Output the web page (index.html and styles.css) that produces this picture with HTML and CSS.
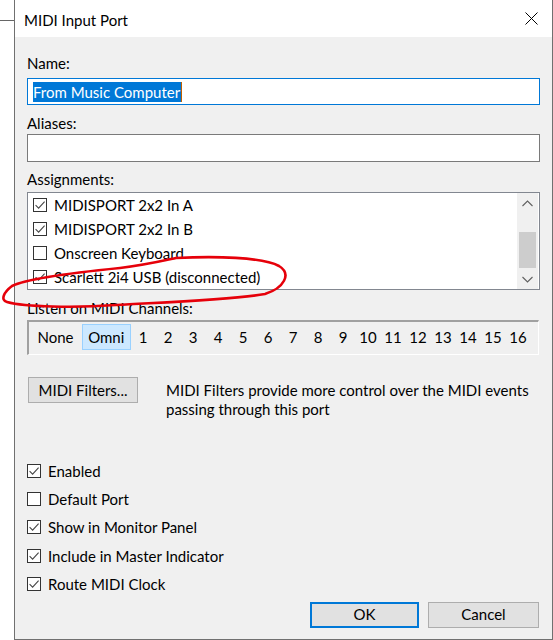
FILE: index.html
```html
<!DOCTYPE html>
<html>
<head>
<meta charset="utf-8">
<link rel="stylesheet" href="styles.css">
</head>
<body>
<div class="bgmark"></div>
<div class="dialog">
  <div class="titlebar">
    <span class="title">MIDI Input Port</span>
    <svg class="close" width="13" height="13" viewBox="0 0 13 13"><path d="M0.5 0.5 L12.5 12.5 M12.5 0.5 L0.5 12.5" stroke="#000" stroke-width="1" fill="none"/></svg>
  </div>
  <div class="content">
    <div class="label l-name">Name:</div>
    <div class="field focus"><span class="sel">From Music Computer</span><span class="caret"></span></div>
    <div class="label l-alias">Aliases:</div>
    <div class="field alias"></div>
    <div class="label l-assign">Assignments:</div>
    <div class="listbox">
      <div class="items">
        <div class="row"><span class="cb"><svg viewBox="0 0 12 12"><path d="M1.6 6.2 L4.6 9.2 L10.6 2.6" stroke="#444" stroke-width="1.05" fill="none"/></svg></span><span>MIDISPORT 2x2 In A</span></div>
        <div class="row"><span class="cb"><svg viewBox="0 0 12 12"><path d="M1.6 6.2 L4.6 9.2 L10.6 2.6" stroke="#444" stroke-width="1.05" fill="none"/></svg></span><span>MIDISPORT 2x2 In B</span></div>
        <div class="row"><span class="cb"></span><span>Onscreen Keyboard</span></div>
        <div class="row"><span class="cb"><svg viewBox="0 0 12 12"><path d="M1.6 6.2 L4.6 9.2 L10.6 2.6" stroke="#444" stroke-width="1.05" fill="none"/></svg></span><span>Scarlett 2i4 USB (disconnected)</span></div>
      </div>
      <div class="scrollbar">
        <div class="arrow"><svg width="11" height="7" viewBox="0 0 11 7"><path d="M0.5 6 L5.5 1 L10.5 6" stroke="#606060" stroke-width="1.1" fill="none"/></svg></div>
        <div class="track"><div class="thumb"></div></div>
        <div class="arrow"><svg width="11" height="7" viewBox="0 0 11 7"><path d="M0.5 1 L5.5 6 L10.5 1" stroke="#606060" stroke-width="1.1" fill="none"/></svg></div>
      </div>
    </div>
    <div class="label l-listen">Listen on MIDI Channels:</div>
    <div class="channels">
      <span class="ch none">None</span>
      <span class="ch omni">Omni</span>
      <span class="ch">1</span><span class="ch">2</span><span class="ch">3</span><span class="ch">4</span>
      <span class="ch">5</span><span class="ch">6</span><span class="ch">7</span><span class="ch">8</span>
      <span class="ch">9</span><span class="ch">10</span><span class="ch">11</span><span class="ch">12</span>
      <span class="ch">13</span><span class="ch">14</span><span class="ch">15</span><span class="ch">16</span>
    </div>
    <div class="filters">
      <div class="btn filt">MIDI Filters...</div>
      <p class="desc">MIDI Filters provide more control over the MIDI events passing through this port</p>
    </div>
    <div class="checks">
      <div class="crow"><span class="cb"><svg viewBox="0 0 12 12"><path d="M1.6 6.2 L4.6 9.2 L10.6 2.6" stroke="#444" stroke-width="1.05" fill="none"/></svg></span><span>Enabled</span></div>
      <div class="crow"><span class="cb"></span><span>Default Port</span></div>
      <div class="crow"><span class="cb"><svg viewBox="0 0 12 12"><path d="M1.6 6.2 L4.6 9.2 L10.6 2.6" stroke="#444" stroke-width="1.05" fill="none"/></svg></span><span>Show in Monitor Panel</span></div>
      <div class="crow"><span class="cb"><svg viewBox="0 0 12 12"><path d="M1.6 6.2 L4.6 9.2 L10.6 2.6" stroke="#444" stroke-width="1.05" fill="none"/></svg></span><span>Include in Master Indicator</span></div>
      <div class="crow"><span class="cb"><svg viewBox="0 0 12 12"><path d="M1.6 6.2 L4.6 9.2 L10.6 2.6" stroke="#444" stroke-width="1.05" fill="none"/></svg></span><span>Route MIDI Clock</span></div>
    </div>
    <div class="buttons">
      <div class="btn ok">OK</div>
      <div class="btn cancel">Cancel</div>
    </div>
  </div>
</div>
<svg class="annotation" width="553" height="640" viewBox="0 0 553 640">
  <path d="M176 258 C 215 256, 262 257, 279 266 C 292 274, 284 288, 265 294 C 230 300, 170 302, 116 305 C 75 308, 25 307, 7 302 C 0 300, 4 292, 12 286 C 28 278, 80 272, 120 268 C 145 265, 162 261, 176 258" stroke="#e6000a" stroke-width="2.6" fill="none" stroke-linecap="round"/>
</svg>
</body>
</html>
```

FILE: styles.css
```css
* { box-sizing: border-box; }

body {
  margin: 0;
  background: #fff;
  font-family: Lato, "Open Sans", sans-serif;
  font-size: 15px;
  color: #000;
  position: relative;
  width: 553px;
  height: 640px;
  overflow: hidden;
}

.bgmark {
  position: absolute;
  left: 0;
  top: 20px;
  width: 14px;
  height: 1px;
  background: #666;
}

.dialog {
  margin-left: 14px;
  width: 539px;
  height: 640px;
  border-left: 1px solid #707070;
  border-right: 1px solid #707070;
  border-bottom: 1px solid #707070;
  background: #f0f0f0;
  display: flex;
  flex-direction: column;
}

.titlebar {
  height: 37px;
  flex: none;
  background: #fff;
  display: flex;
  align-items: center;
  justify-content: space-between;
  padding: 0 14px 0 9px;
}

.title { line-height: 20px; margin-top: 2px; }

.close { display: block; }

.content {
  display: flex;
  flex-direction: column;
  padding-left: 12px;
}

.label { line-height: 20px; height: 20px; }
.l-name { margin-top: 16px; }
.l-alias { margin-top: 8px; }
.l-assign { margin-top: 7px; }
.l-listen { margin-top: 8px; }

.field {
  width: 513px;
  height: 27px;
  margin-top: 5px;
  background: #fff;
  border: 1px solid #7a7a7a;
  display: flex;
  align-items: center;
  padding-left: 5px;
}
.field.focus { border-color: #0078d7; }
.field.alias { height: 28px; margin-top: 1px; }

.sel {
  background: #0078d7;
  color: #fff;
  line-height: 20px;
  height: 20px;
  padding-right: 1px;
}
.caret {
  width: 1px;
  height: 20px;
  background: #c06000;
}

.listbox {
  margin-top: 3px;
  width: 513px;
  height: 98px;
  background: #fff;
  border: 1px solid #828790;
  display: flex;
  overflow: hidden;
}

.items { flex: 1; }

.row {
  height: 24px;
  display: flex;
  align-items: center;
  padding-left: 5px;
  gap: 7px;
}

.cb {
  width: 14px;
  height: 14px;
  flex: none;
  border: 1px solid #333;
  background: #fff;
  display: flex;
}
.cb svg { width: 12px; height: 12px; display: block; }

.scrollbar {
  width: 21px;
  margin-right: 1px;
  background: #f0f0f0;
  display: flex;
  flex-direction: column;
}
.arrow {
  height: 20px;
  display: flex;
  align-items: center;
  justify-content: center;
}
.track { flex: 1; padding-top: 19px; display: flex; justify-content: center; }
.thumb { width: 17px; height: 36px; background: #cdcdcd; }

.channels {
  margin-top: 2px;
  width: 512px;
  height: 35px;
  border-style: solid;
  border-width: 2px 1px 1px 2px;
  border-color: #a0a0a0 #fff #fff #a0a0a0;
  display: flex;
  padding: 2px 0 4px 0;
}
.ch {
  width: 25px;
  height: 26px;
  flex: none;
  display: flex;
  align-items: center;
  justify-content: center;
  padding-bottom: 1px;
}
.ch.none { width: 53px; }
.ch.omni { width: 48.5px; background: #cce8ff; border: 1px solid #99d1ff; }

.filters {
  margin-top: 22px;
  height: 59px;
  display: flex;
  align-items: flex-start;
  padding-left: 1px;
}

.btn {
  background: #e1e1e1;
  border: 1px solid #adadad;
  display: flex;
  align-items: center;
  justify-content: center;
  height: 26px;
  padding-bottom: 1px;
}
.filt { width: 110px; }

.desc {
  margin: 4px 0 0 28px;
  width: 372px;
  line-height: 19px;
}

.checks {
  margin-top: 21px;
  display: flex;
  flex-direction: column;
}
.crow {
  height: 28.2px;
  display: flex;
  align-items: center;
  gap: 7px;
}

.buttons {
  margin-top: 4px;
  display: flex;
  justify-content: flex-end;
  gap: 9px;
  padding-right: 13px;
}
.ok { width: 109px; border: 2px solid #0078d7; }
.cancel { width: 111px; }

.annotation {
  position: absolute;
  left: 0;
  top: 0;
  pointer-events: none;
}
```
